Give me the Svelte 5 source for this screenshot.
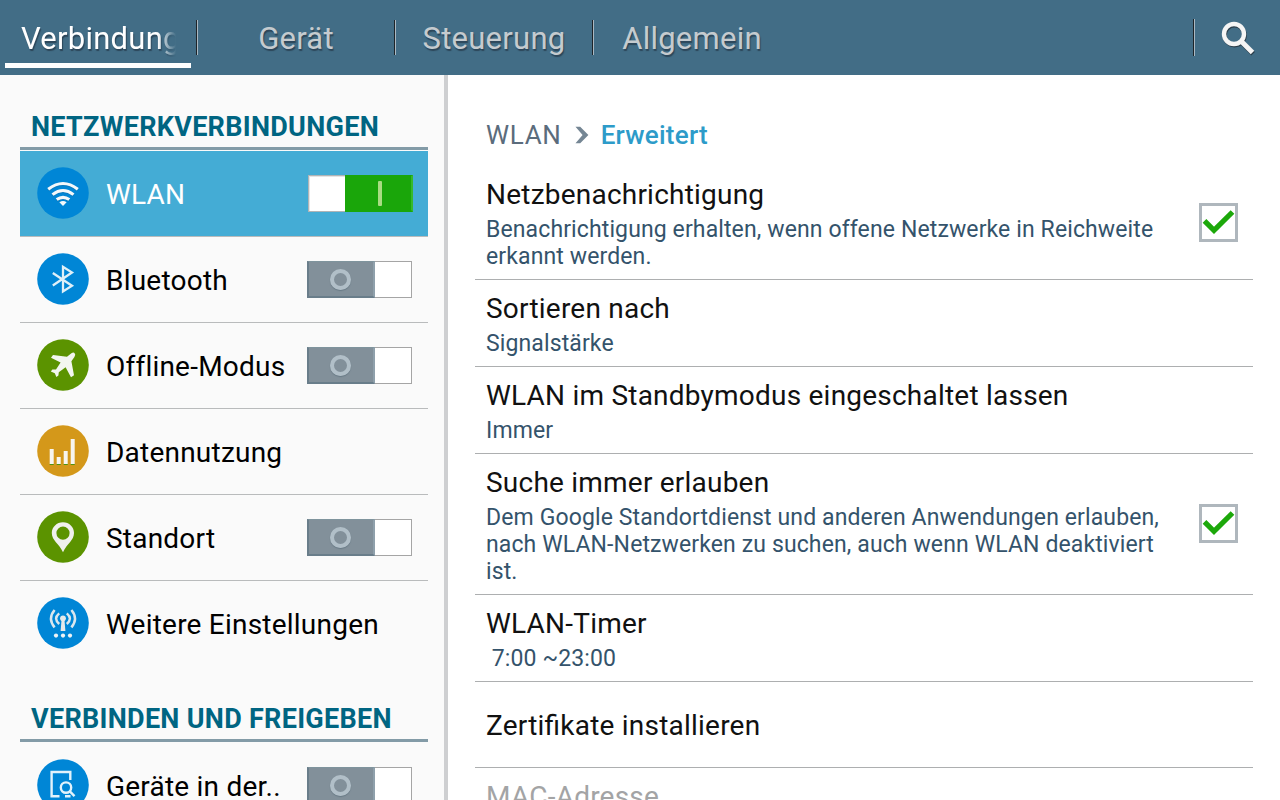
<script lang="ts">
    type Item = { label: string; icon: string; color: string; toggle?: boolean; selected?: boolean };
    type Setting = { title: string; summary?: string[]; checked?: boolean; disabled?: boolean };

    const tabs = ['Verbindungen', 'Gerät', 'Steuerung', 'Allgemein'];

    const sections: Array<{ title: string; items: Item[] }> = [
        {
            title: 'NETZWERKVERBINDUNGEN',
            items: [
                { label: 'WLAN', icon: 'wifi', color: '#0086d6', toggle: true, selected: true },
                { label: 'Bluetooth', icon: 'bluetooth', color: '#0086d6', toggle: false },
                { label: 'Offline-Modus', icon: 'plane', color: '#5b9300', toggle: false },
                { label: 'Datennutzung', icon: 'data', color: '#d4981a' },
                { label: 'Standort', icon: 'pin', color: '#5b9300', toggle: false },
                { label: 'Weitere Einstellungen', icon: 'antenna', color: '#0086d6' }
            ]
        },
        {
            title: 'VERBINDEN UND FREIGEBEN',
            items: [{ label: 'Geräte in der..', icon: 'nearby', color: '#0086d6', toggle: false }]
        }
    ];

    const settings: Setting[] = [
        {
            title: 'Netzbenachrichtigung',
            summary: ['Benachrichtigung erhalten, wenn offene Netzwerke in Reichweite', 'erkannt werden.'],
            checked: true
        },
        { title: 'Sortieren nach', summary: ['Signalstärke'] },
        { title: 'WLAN im Standbymodus eingeschaltet lassen', summary: ['Immer'] },
        {
            title: 'Suche immer erlauben',
            summary: [
                'Dem Google Standortdienst und anderen Anwendungen erlauben,',
                'nach WLAN-Netzwerken zu suchen, auch wenn WLAN deaktiviert',
                'ist.'
            ],
            checked: true
        },
        { title: 'WLAN-Timer', summary: ['\u00a07:00 ~23:00'] },
        { title: 'Zertifikate installieren' },
        { title: 'MAC-Adresse', disabled: true }
    ];

    let activeTab = $state(0);
</script>

<div class="screen">
    <header>
        {#each tabs as tab, i}
            <button class="tab" class:active={i === activeTab} onclick={() => (activeTab = i)}>
                <span>{tab}</span>
            </button>
        {/each}
        <button class="search" aria-label="Suchen">
            <svg width="36" height="38" viewBox="0 0 36 38">
                <g fill="none" stroke="#2b3d49" transform="translate(0.6 1.2)">
                    <circle cx="14" cy="14" r="10" stroke-width="4.4" />
                    <path d="M21 21L32.5 32.5" stroke-width="5" />
                </g>
                <g fill="none" stroke="#f5f5f5">
                    <circle cx="14" cy="14" r="10" stroke-width="4.4" />
                    <path d="M21 21L32.5 32.5" stroke-width="5" />
                </g>
            </svg>
        </button>
    </header>

    <div class="body">
        <nav>
            {#each sections as section}
                <h2>{section.title}</h2>
                <ul>
                    {#each section.items as item}
                        <li class:selected={item.selected}>
                            <svg class="icon" viewBox="0 0 52 52">
                                <circle cx="26" cy="26" r="25.8" fill={item.color} />
                                {#if item.icon === 'wifi'}
                                    <g fill="none" stroke="#1c5f8c" stroke-width="2.8" opacity=".35" transform="translate(0 1)">
                                        <path d="M11.2 22.2Q26 10.8 40.8 22.2M15.5 27.6Q26 19.4 36.5 27.6M19.7 32.6Q26 28 32.3 32.6" />
                                    </g>
                                    <g fill="none" stroke="#f4f8fa" stroke-width="3.1">
                                        <path d="M11.2 22.2Q26 10.8 40.8 22.2M15.5 27.6Q26 19.4 36.5 27.6M19.7 32.6Q26 28 32.3 32.6" />
                                    </g>
                                    <path d="M22.4 35.2Q26 32.6 29.6 35.2L26 39Z" fill="#f4f8fa" />
                                {:else if item.icon === 'bluetooth'}
                                    <path d="M15.8 20L35 32.8L26 38.5V13.8L35 19.5L15.8 32.5" fill="none" stroke="#dff0f8" stroke-width="2.3" />
                                {:else if item.icon === 'plane'}
                                    <path
                                        d="M37.6 14.2Q39 15.5 37.4 18L34.4 22.2L37 36.2L34 38.2L28.6 28.2L21.8 33.2L21.4 36.6L19.4 38L17.8 34.2L13.8 32.4L15.4 30.6L19 30.4L23.6 23.6L14 18.8L16 16L30 17.8L34.4 14.2Q36.6 13 37.6 14.2Z"
                                        fill="#f3f6ef"
                                    />
                                {:else if item.icon === 'data'}
                                    <path d="M12.7 24h4v15h-4zM19.7 32h4v7h-4zM26.7 26h4v13h-4zM33.7 14h4v25h-4z" fill="#f7f5ef" />
                                    <path d="M12.7 39h4v1h-4zM19.7 39h4v1h-4zM26.7 39h4v1h-4zM33.7 39h4v1h-4z" fill="#4e9312" />
                                {:else if item.icon === 'pin'}
                                    <path
                                        fill-rule="evenodd"
                                        d="M26 11.2C19.7 11.2 14.8 16 14.8 22C14.8 29.5 22 32.5 26 41.2C30 32.5 37 29.5 37 22C37 16 32.3 11.2 26 11.2ZM26 15.5A6.6 6.6 0 1 1 26 28.7A6.6 6.6 0 1 1 26 15.5Z"
                                        fill="#f0f0ee"
                                    />
                                {:else if item.icon === 'antenna'}
                                    <g fill="none" stroke="#dbe7ee" stroke-width="2.5">
                                        <path d="M17.6 13Q10.4 21.5 17.6 30.4M34.4 13Q41.6 21.5 34.4 30.4" />
                                        <path d="M22.2 16.4Q16 21.5 22.2 27M29.8 16.4Q36 21.5 29.8 27" />
                                    </g>
                                    <circle cx="26" cy="21.3" r="2.9" fill="#e6e9ea" />
                                    <path d="M24.6 22h2.8L28.4 34h-4.8z" fill="#e6e9ea" />
                                    <g fill="#eef3f5">
                                        <circle cx="19" cy="38.6" r="2.1" />
                                        <circle cx="26" cy="38.6" r="2.1" />
                                        <circle cx="33" cy="38.6" r="2.1" />
                                    </g>
                                {:else if item.icon === 'nearby'}
                                    <g fill="none" stroke="#e2f2fb" stroke-width="2.4">
                                        <path d="M33.3 21V13H14.6V37.3H22.5M28 37.3h5.5" />
                                        <circle cx="29" cy="28.6" r="5.2" />
                                        <path d="M32.6 32.2L37.5 37.2" />
                                    </g>
                                {/if}
                            </svg>
                            <span class="label">{item.label}</span>
                            {#if item.toggle !== undefined}
                                <div class="toggle" class:on={item.toggle}>
                                    <div class="track"><i></i></div>
                                    <div class="thumb"></div>
                                </div>
                            {/if}
                        </li>
                    {/each}
                </ul>
            {/each}
        </nav>

        <main>
            <div class="breadcrumb">
                <span>WLAN</span>
                <svg width="14" height="18" viewBox="0 0 14 18">
                    <path d="M0.5 0.8H5.2L13.4 9L5.2 17.2H0.5L7.6 9Z" fill="#758694" />
                </svg>
                <b>Erweitert</b>
            </div>
            {#each settings as setting}
                <div class="setting" class:disabled={setting.disabled} class:single={!setting.summary}>
                    <div>
                        <div class="title">{setting.title}</div>
                        {#if setting.summary}
                            <div class="summary">
                                {#each setting.summary as line}
                                    <div>{line}</div>
                                {/each}
                            </div>
                        {/if}
                    </div>
                    {#if setting.checked}
                        <svg class="check" viewBox="0 0 39 39">
                            <rect x="1.5" y="1.5" width="36" height="36" fill="#fff" stroke="#afb7bd" stroke-width="3" />
                            <path d="M5.5 17.8L15 27.3L33.5 9" fill="none" stroke="#1ca80a" stroke-width="5.2" />
                        </svg>
                    {/if}
                </div>
            {/each}
        </main>
    </div>
</div>

<style>
    :global(body) {
        margin: 0;
        overflow: hidden;
    }

    .screen {
        width: 1280px;
        height: 800px;
        overflow: hidden;
        display: flex;
        flex-direction: column;
        background: #fff;
        font-family: Roboto, sans-serif;
        color: #000;
    }

    button {
        border: 0;
        background: none;
        font: inherit;
        color: inherit;
    }

    header {
        display: flex;
        align-items: center;
        flex: 0 0 75px;
        background: #426d86;
    }

    .tab {
        box-sizing: border-box;
        width: 198px;
        height: 75px;
        padding: 1px 22px 0 20px;
        font-size: 31px;
        letter-spacing: 0.25px;
        color: #c5cbcf;
        text-shadow: 1px 2px 1px rgba(30, 45, 60, 0.6);
        background: linear-gradient(90deg, #1d2429 50%, #aab9c3 50%) 100% 20px / 2px 35px no-repeat;
    }

    .tab:nth-child(4) {
        background: none;
    }

    .tab.active {
        padding: 1px 22px 0 21px;
        color: #fff;
        text-align: left;
        background:
            linear-gradient(#fff, #fff) 5px 63px / 186px 5px no-repeat,
            linear-gradient(90deg, #1d2429 50%, #aab9c3 50%) 100% 20px / 2px 35px no-repeat;
    }

    .tab span {
        display: block;
        white-space: nowrap;
    }

    .tab.active span {
        overflow: hidden;
        -webkit-mask-image: linear-gradient(90deg, #000 88%, transparent);
        mask-image: linear-gradient(90deg, #000 88%, transparent);
    }

    .search {
        display: flex;
        align-items: center;
        width: 87px;
        height: 75px;
        margin-left: auto;
        padding: 2px 0 0 27px;
        background: linear-gradient(90deg, #1d2429 50%, #aab9c3 50%) 0 19px / 2px 37px no-repeat;
    }

    .body {
        display: flex;
        flex: 1;
        min-height: 0;
    }

    nav {
        box-sizing: border-box;
        width: 448px;
        padding: 0 16px 0 20px;
        border-right: 4px solid #cecfd1;
        background: #fafafa;
        overflow: hidden;
    }

    h2 {
        box-sizing: border-box;
        height: 75px;
        margin: 0 0 1px;
        padding: 36px 0 0 11px;
        border-bottom: 3px solid #839ba7;
        font-size: 27px;
        font-weight: 700;
        line-height: 32px;
        letter-spacing: 0.29px;
        color: #006582;
        white-space: nowrap;
    }

    ul {
        margin: 0;
        padding: 0;
        list-style: none;
    }

    li {
        box-sizing: border-box;
        display: flex;
        align-items: center;
        height: 86px;
        padding: 0 16px 0 17px;
        border-bottom: 1px solid #b9bbbc;
        font-size: 28px;
        letter-spacing: 0.22px;
    }

    li:last-child {
        border-bottom-color: transparent;
    }

    li.selected {
        background: #44acd5;
        color: #fff;
    }

    .icon {
        flex: none;
        width: 52px;
        height: 52px;
        margin: -1px 0 0 0.3px;
    }

    .label {
        flex: 1;
        margin-left: 16.7px;
        padding-top: 1px;
        white-space: nowrap;
    }

    .toggle {
        display: flex;
        width: 105px;
        height: 37px;
    }

    .track {
        box-sizing: border-box;
        display: flex;
        align-items: center;
        justify-content: center;
        width: 68px;
        border: solid #697d8a;
        border-width: 1px 2px 2px 2px;
        border-top-color: #7f949d;
        border-right-color: #8fa0ab;
        background: #82909a;
    }

    .track i {
        box-sizing: border-box;
        width: 21px;
        height: 21px;
        margin-right: 1px;
        border: 4px solid #b1bfc8;
        border-radius: 50%;
        box-shadow: 0 1px 1px #677985;
    }

    .thumb {
        box-sizing: border-box;
        flex: 1;
        border: 1px solid #a5a5a5;
        border-left: 0;
        background: #fff;
    }

    .toggle.on {
        flex-direction: row-reverse;
        margin-right: -1px;
    }

    .on .track {
        border-color: #1aa60a;
        border-right-color: #36b92b;
        background: #1aa60a;
    }

    .on .track i {
        width: 4px;
        height: 25px;
        margin-left: 2px;
        border: 0;
        border-radius: 1px;
        background: #a9dc83;
        box-shadow: none;
    }

    .on .thumb {
        border: 1px solid #b0b4b6;
        border-right: 0;
        box-shadow: inset 1px 1px #e4e4e4;
    }

    main {
        flex: 1;
        padding: 0 27px;
        overflow: hidden;
    }

    .breadcrumb {
        display: flex;
        align-items: center;
        height: 47px;
        padding: 36px 11px 8px;
        font-size: 26px;
        letter-spacing: 0.7px;
        color: #5b6c7c;
    }

    .breadcrumb svg {
        margin: 0 12px 0 13px;
    }

    .breadcrumb b {
        font-weight: 500;
        letter-spacing: 0.25px;
        color: #2d9bc9;
    }

    .setting {
        display: flex;
        align-items: center;
        justify-content: space-between;
        padding: 12px 15px 9px 11px;
        border-bottom: 1px solid #adafb0;
    }

    .title {
        font-size: 28px;
        line-height: 33px;
        letter-spacing: 0.22px;
        font-feature-settings: 'liga';
        white-space: nowrap;
        color: #111;
    }

    .summary {
        margin-top: 5px;
        font-size: 23px;
        line-height: 27px;
        letter-spacing: 0.12px;
        color: #34536b;
        white-space: nowrap;
    }

    .setting.single {
        padding: 27px 11px 25px;
    }

    .setting.disabled {
        padding-top: 12px;
    }

    .disabled .title {
        color: #a3a4a5;
    }

    .check {
        flex: none;
        width: 39px;
        height: 39px;
        margin-bottom: 4px;
    }
</style>
